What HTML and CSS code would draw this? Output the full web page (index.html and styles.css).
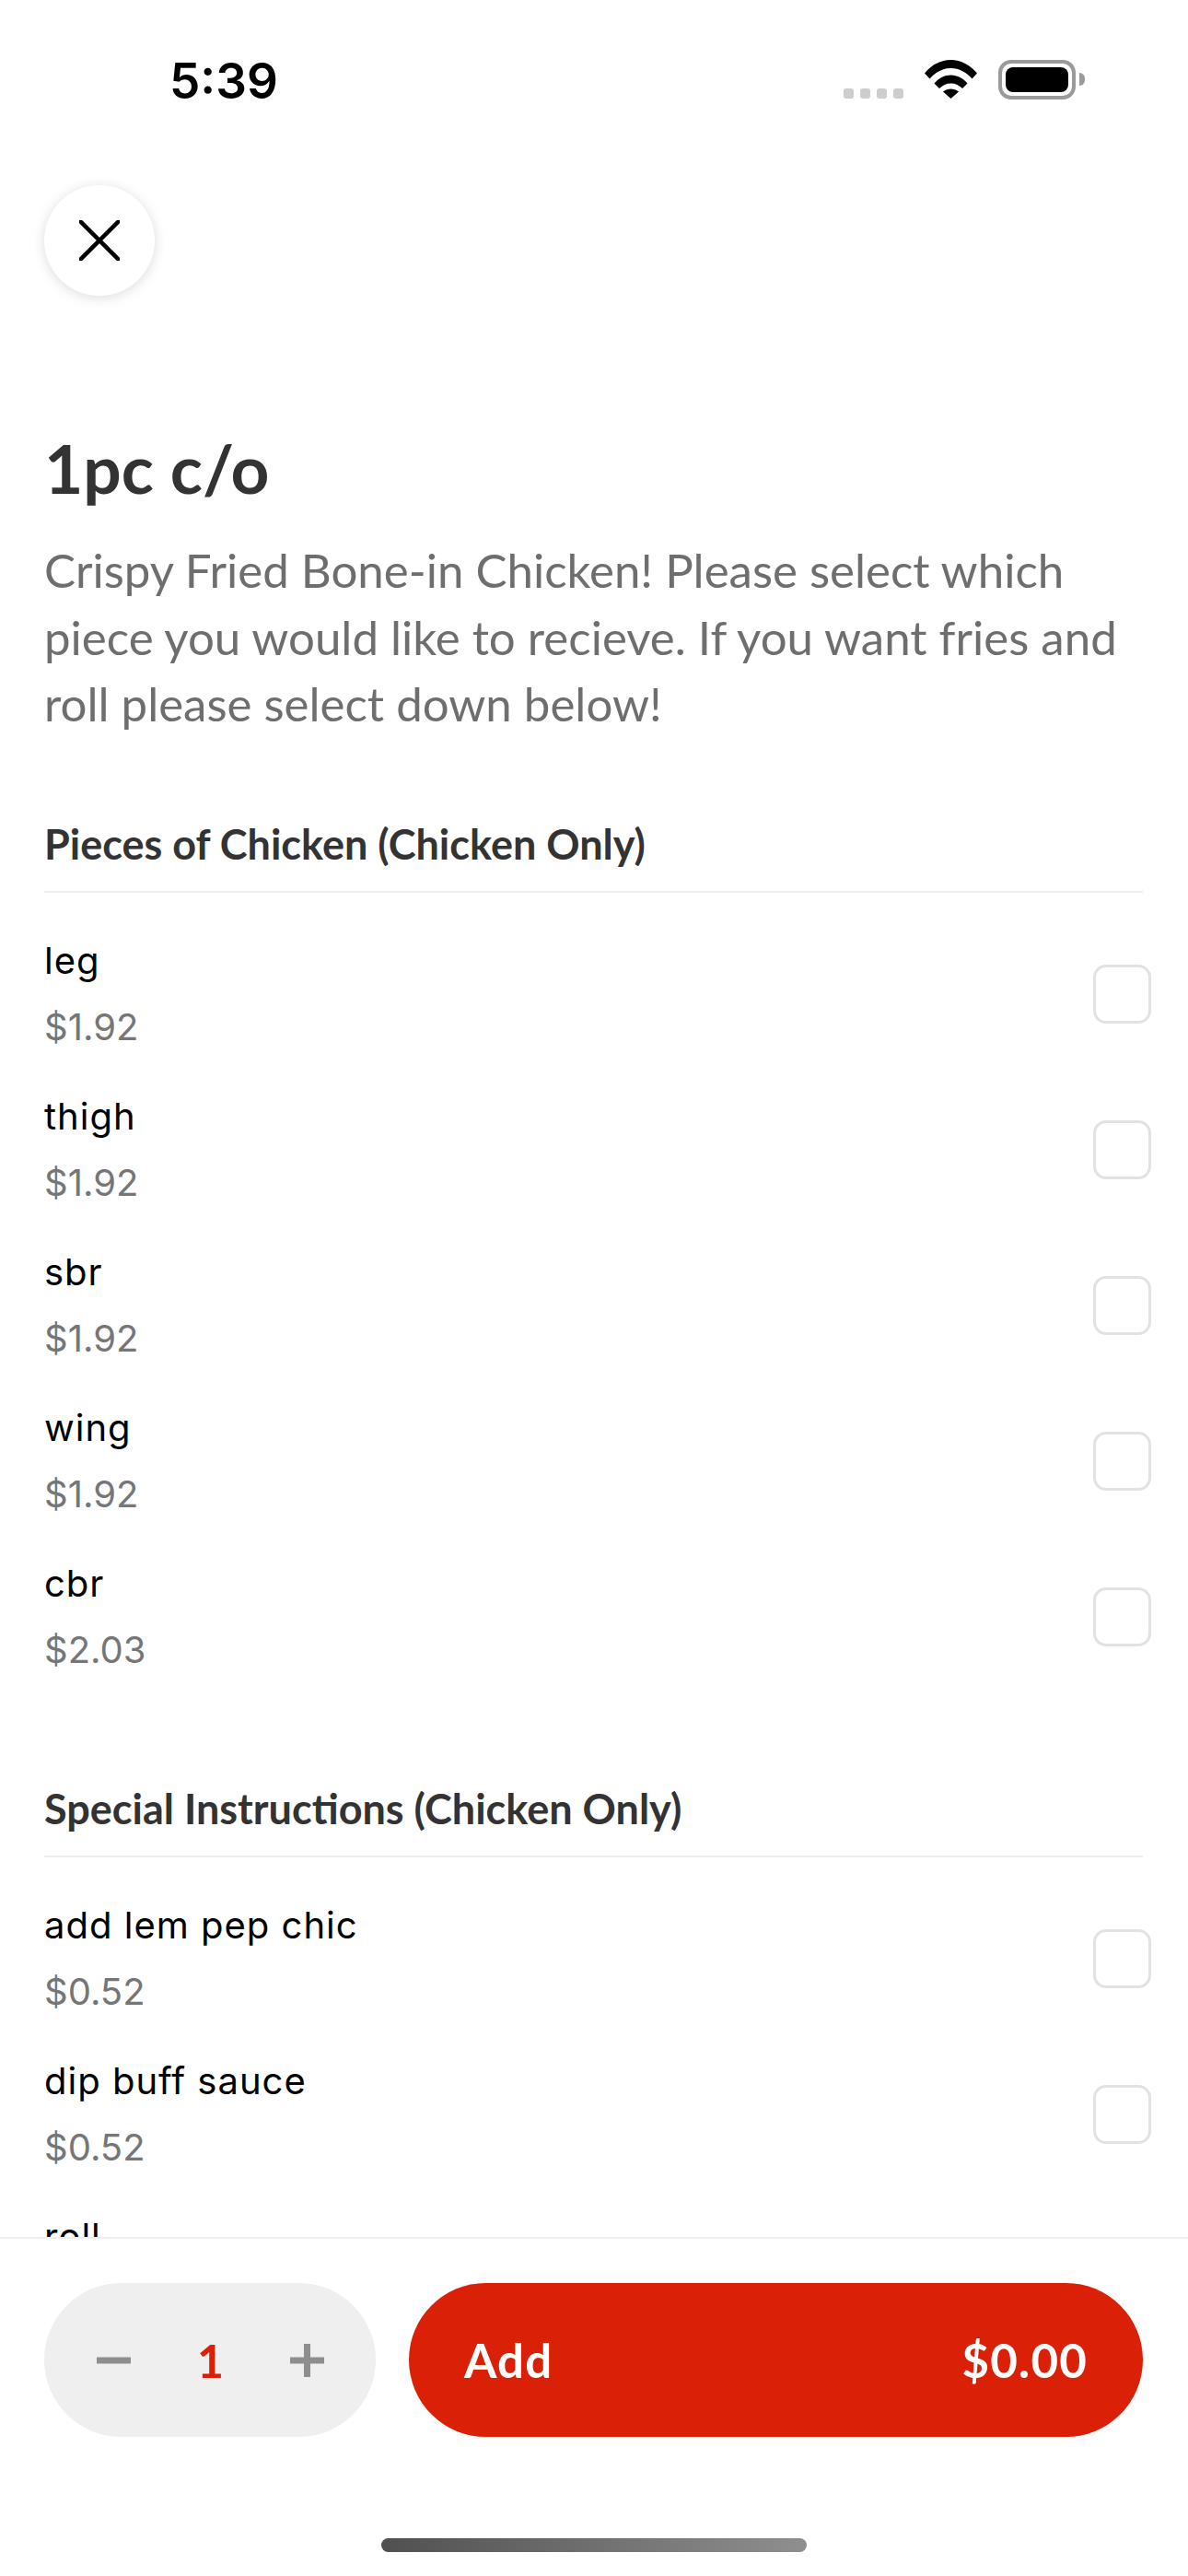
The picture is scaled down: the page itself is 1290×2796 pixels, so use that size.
FILE: index.html
```html
<!DOCTYPE html>
<html lang="en">
<head>
    <meta charset="utf-8" />
    <title>1pc c/o</title>
    <link rel="stylesheet" href="styles.css">
</head>
<body>
<div class="screen">
    <div class="status-bar">
        <span class="time">5:39</span>
        <div class="status-icons">
            <div class="signal"><i></i><i></i><i></i><i></i></div>
            <svg class="wifi" width="57" height="42" viewBox="0 0 57 42">
                <path d="M0 14.5C7.5 5.5 17.5 0 28.500 0S49.500 5.500 57 14.500L51.500 20.500C45.500 13.500 37.500 9 28.500 9S11.500 13.500 5.500 20.500Z"/>
                <path d="M10.500 25.500C15 20 21.500 16.500 28.500 16.500S42 20 46.500 25.500L41 31C37.500 27.500 33.500 25.500 28.500 25.500S19.500 27.500 16 31Z"/>
                <path d="M20 34.500C22.500 32.500 25.500 31.500 28.500 31.500S34.500 32.500 37 34.500L28.500 42Z"/>
            </svg>
            <div class="battery"><div class="battery-level"></div></div>
            <div class="battery-nub"></div>
        </div>
    </div>

    <button class="close-btn" aria-label="Close">
        <svg width="44" height="44" viewBox="0 0 44 44">
            <path d="M1.500 1.500L42.500 42.500M42.500 1.500L1.500 42.500" fill="none" stroke="#000" stroke-width="4.500" stroke-linecap="round"/>
        </svg>
    </button>

    <main class="content">
        <h1 class="title">1pc c/o</h1>
        <p class="desc">Crispy Fried Bone-in Chicken! Please select which piece you would like to recieve. If you want fries and roll please select down below!</p>

        <section class="group">
            <h2 class="group-title">Pieces of Chicken (Chicken Only)</h2>
            <div class="option"><div><div class="opt-name">leg</div><div class="opt-price">$1.92</div></div><span class="check"></span></div>
            <div class="option"><div><div class="opt-name">thigh</div><div class="opt-price">$1.92</div></div><span class="check"></span></div>
            <div class="option"><div><div class="opt-name">sbr</div><div class="opt-price">$1.92</div></div><span class="check"></span></div>
            <div class="option"><div><div class="opt-name">wing</div><div class="opt-price">$1.92</div></div><span class="check"></span></div>
            <div class="option"><div><div class="opt-name">cbr</div><div class="opt-price">$2.03</div></div><span class="check"></span></div>
        </section>

        <section class="group">
            <h2 class="group-title">Special Instructions (Chicken Only)</h2>
            <div class="option"><div><div class="opt-name">add lem pep chic</div><div class="opt-price">$0.52</div></div><span class="check"></span></div>
            <div class="option"><div><div class="opt-name">dip buff sauce</div><div class="opt-price">$0.52</div></div><span class="check"></span></div>
            <!-- runs under the bottom bar, only the top of the name shows -->
            <div class="option option-under"><div class="opt-name">roll</div></div>
        </section>
    </main>

    <footer class="footer">
        <div class="actions">
            <div class="stepper">
                <svg width="37" height="36" viewBox="0 0 37 36"><rect x="0" y="14.500" width="37" height="7" fill="#8e8e8e"/></svg>
                <span class="qty">1</span>
                <svg width="37" height="36" viewBox="0 0 37 36"><path d="M0 14.500H15V0H22V14.500H37V21.500H22V36H15V21.500H0Z" fill="#8e8e8e"/></svg>
            </div>
            <button class="add-btn"><span>Add</span><span>$0.00</span></button>
        </div>
        <div class="home-bar"></div>
    </footer>
</div>
</body>
</html>
```
FILE: styles.css
```css
* { box-sizing: border-box; }
html, body { margin: 0; background: #fff; }
.screen {
    width: 1290px;
    height: 2796px;
    display: flex;
    flex-direction: column;
    overflow: hidden;
    font-family: Lato, "Liberation Sans", sans-serif;
}

/* status bar */
.status-bar {
    flex: none;
    height: 201px;
    display: flex;
    justify-content: space-between;
    align-items: flex-start;
    padding: 65px 112px 0 184px;
}
.time {
    font-family: Inter, sans-serif;
    font-size: 53px;
    font-weight: 600;
    line-height: 46px;
    color: #000;
}
.status-icons { display: flex; align-items: flex-start; }
.signal {
    display: flex;
    gap: 7px;
    margin: 31px 23px 0 0;
}
.signal i {
    width: 11px;
    height: 11px;
    border-radius: 3px;
    background: #cdcdcd;
}
.wifi { display: block; }
.battery {
    width: 84px;
    height: 43px;
    margin-left: 23px;
    padding: 4px;
    border: 4px solid #9a9a9a;
    border-radius: 14px;
}
.battery-level {
    height: 100%;
    border-radius: 8px;
    background: #000;
}
.battery-nub {
    width: 6px;
    height: 14px;
    margin: 14px 0 0 4px;
    border-radius: 0 7px 7px 0;
    background: #9a9a9a;
}

/* close */
.close-btn {
    flex: none;
    align-self: flex-start;
    width: 120px;
    height: 120px;
    margin-left: 48px;
    padding: 0;
    display: flex;
    align-items: center;
    justify-content: center;
    border: none;
    border-radius: 50%;
    background: #fff;
    box-shadow: 0 2px 14px rgba(0, 0, 0, 0.14);
}

/* scrolling part */
.content {
    flex: 1;
    min-height: 0;
    overflow: hidden;
    padding: 0 49px 0 48px;
}
.title {
    margin: 143px 0 0;
    font-size: 73px;
    line-height: 88px;
    font-weight: 700;
    color: #333;
}
.desc {
    margin: 31px 0 0;
    font-size: 51px;
    line-height: 72.500px;
    color: #6e6e6e;
}
.group { margin-bottom: 97px; }
.group-title {
    margin: 0;
    height: 79px;
    font-size: 45px;
    line-height: 52px;
    font-weight: 700;
    color: #333;
    border-bottom: 2px solid #ededed;
}
.desc + .group { margin-top: 89px; }
.option {
    height: 169px;
    margin-right: -9px;
    display: flex;
    justify-content: space-between;
    align-items: center;
}
.option-under {
    align-items: flex-start;
    padding-top: 21px;
}
.group-title + .option { margin-top: 26px; }
.opt-name {
    font-family: Inter, sans-serif;
    font-size: 40px;
    letter-spacing: 1px;
    line-height: 54px;
    color: #000;
}
.opt-price {
    margin-top: 18px;
    font-family: Inter, sans-serif;
    font-size: 40px;
    line-height: 54px;
    color: #767676;
}
.check {
    width: 63px;
    height: 64px;
    border: 3px solid #e2e2de;
    border-radius: 14px;
}

/* bottom bar */
.footer {
    flex: none;
    height: 368px;
    padding: 48px 49px 0 48px;
    background: #fff;
    border-top: 2px solid #efefef;
}
.actions { display: flex; gap: 36px; }
.stepper {
    flex: none;
    width: 360px;
    height: 167px;
    padding: 0 56px 0 57px;
    display: flex;
    justify-content: space-between;
    align-items: center;
    border-radius: 84px;
    background: #efefef;
}
.qty {
    font-size: 50px;
    font-weight: 700;
    color: #da2007;
}
.add-btn {
    flex: 1;
    height: 167px;
    padding: 0 60px;
    display: flex;
    justify-content: space-between;
    align-items: center;
    border: none;
    border-radius: 84px;
    background: #da2007;
    color: #fff;
    font-family: Lato, sans-serif;
    font-size: 51px;
    font-weight: 700;
    letter-spacing: 1.200px;
}
.home-bar {
    width: 462px;
    height: 15px;
    margin: 110px auto 0;
    border-radius: 8px;
    background: linear-gradient(100deg, #505050, #8f8f8f);
}
```
